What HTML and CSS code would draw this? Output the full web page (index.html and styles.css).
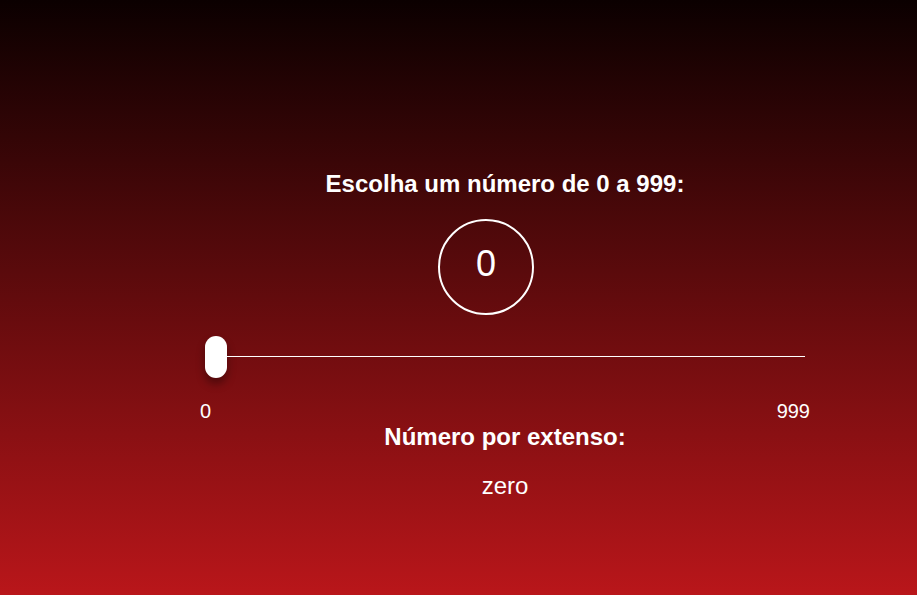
FILE: index.html
```html
<!DOCTYPE html>
<html lang="pt">
<head>
<meta charset="utf-8">
<title>Número por extenso</title>
<link rel="stylesheet" href="styles.css">
</head>
<body>
<main class="app">
  <h1 class="title">Escolha um número de 0 a 999:</h1>
  <div class="display"><span class="display-value">0</span></div>
  <div class="slider">
    <div class="thumb"></div>
    <div class="track"></div>
  </div>
  <div class="range-labels">
    <span>0</span>
    <span>999</span>
  </div>
  <h2 class="subtitle">Número por extenso:</h2>
  <p class="words">zero</p>
</main>
</body>
</html>
```
FILE: styles.css
```css
html, body {
  margin: 0;
  height: 100%;
}
body {
  background: linear-gradient(to bottom, #0b0000 0%, #b9161a 100%);
  color: #ffffff;
  font-family: "Liberation Sans", Arial, sans-serif;
  overflow: hidden;
}
.app {
  width: 610px;
  margin-left: 200px;
  padding-top: 170px;
  display: flex;
  flex-direction: column;
}
.title {
  margin: 0;
  font-size: 24px;
  line-height: 28px;
  font-weight: bold;
  text-align: center;
}
.display {
  box-sizing: border-box;
  width: 96px;
  height: 96px;
  border: 2px solid #ffffff;
  border-radius: 50%;
  margin: 21px 0 0 238px;
  padding-bottom: 6px;
  display: flex;
  align-items: center;
  justify-content: center;
}
.display-value {
  font-size: 36px;
  line-height: 36px;
}
.slider {
  margin: 21px 5px 0 5px;
  height: 42px;
  display: flex;
  align-items: center;
}
.thumb {
  width: 22px;
  height: 42px;
  border-radius: 11px;
  background: #ffffff;
  box-shadow: 0 6px 8px rgba(0, 0, 0, 0.35);
  flex: none;
}
.track {
  flex: 1;
  height: 1px;
  margin-top: -2px;
  background: #ffffff;
}
.range-labels {
  display: flex;
  justify-content: space-between;
  margin-top: 21px;
  font-size: 20px;
  line-height: 24px;
}
.subtitle {
  margin: 0;
  font-size: 24px;
  line-height: 28px;
  font-weight: bold;
  text-align: center;
}
.words {
  margin: 21px 0 0 0;
  font-size: 24px;
  line-height: 28px;
  text-align: center;
}
```
